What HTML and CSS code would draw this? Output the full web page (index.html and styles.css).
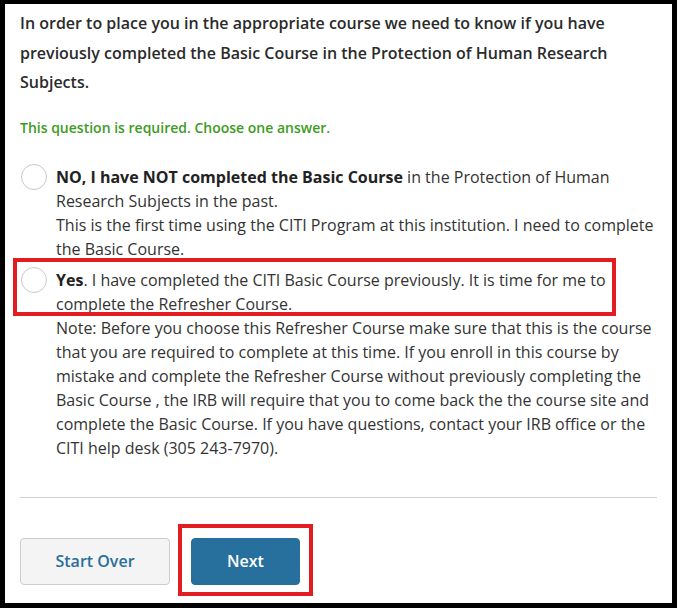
FILE: index.html
```html
<!DOCTYPE html>
<html lang="en">
<head>
<meta charset="utf-8">
<title>Course selection</title>
<link rel="stylesheet" href="styles.css">
</head>
<body>
<div class="frame">
  <p class="question">In order to place you in the appropriate course we need to know if you have previously completed the Basic Course in the Protection of Human Research Subjects.</p>
  <p class="required">This question is required. Choose one answer.</p>
  <div class="options">
    <label class="option">
      <span class="radio"></span>
      <span class="text"><strong>NO, I have NOT completed the Basic Course</strong> in the Protection of Human Research Subjects in the past.<br>This is the first time using the CITI Program at this institution. I need to complete the Basic Course.</span>
    </label>
    <label class="option">
      <span class="radio"></span>
      <span class="text"><strong>Yes</strong>. I have completed the CITI Basic Course previously. It is time for me to complete the Refresher Course.<br>Note: Before you choose this Refresher Course make sure that this is the course that you are required to complete at this time. If you enroll in this course by mistake and complete the Refresher Course without previously completing the Basic Course , the IRB will require that you to come back the the course site and complete the Basic Course. If you have questions, contact your IRB office or the CITI help desk (305 243-7970).</span>
      <span class="highlight"></span>
    </label>
  </div>
  <hr class="divider">
  <div class="actions">
    <button class="btn btn-secondary" type="button">Start Over</button>
    <span class="next-wrap">
      <button class="btn btn-primary" type="button">Next</button>
      <span class="next-mark"></span>
    </span>
  </div>
</div>
</body>
</html>
```
FILE: styles.css
```css
html, body {
  margin: 0;
  padding: 0;
  background: #fff;
}
body {
  font-family: "Open Sans", "Noto Sans", sans-serif;
  color: #333;
}
.frame {
  box-sizing: border-box;
  width: 677px;
  height: 608px;
  border: 5px solid #000;
  border-top-width: 4px;
  padding: 5px 15px 0 15px;
}
.question {
  margin: 0;
  font-size: 16px;
  line-height: 29.5px;
  font-weight: 600;
  color: #2b2b2b;
}
.required {
  margin: 20px 0 0 0;
  font-size: 14px;
  line-height: 20px;
  font-weight: 600;
  color: #3d9b1d;
}
.options {
  margin-top: 27px;
  display: flex;
  flex-direction: column;
  gap: 7px;
}
.option {
  position: relative;
  display: flex;
  align-items: flex-start;
  gap: 9px;
  padding-left: 1px;
  font-size: 16px;
  line-height: 24px;
  color: #333;
}
.radio {
  flex: none;
  box-sizing: border-box;
  width: 26px;
  height: 26px;
  margin-top: -1px;
  border: 1px solid #c8c8c8;
  border-radius: 50%;
  background: #fff;
}
.text strong {
  font-weight: 700;
  color: #222;
}
.highlight {
  position: absolute;
  left: -7px;
  top: -10px;
  width: 603px;
  height: 58px;
  box-sizing: border-box;
  border: 4px solid #e21d22;
  pointer-events: none;
}
.divider {
  margin: 37px 0 0 0;
  border: 0;
  height: 1px;
  background: #cfcfcf;
}
.actions {
  margin-top: 40px;
  display: flex;
  gap: 21px;
}
.btn {
  box-sizing: border-box;
  height: 47px;
  font-family: "Open Sans", "Noto Sans", sans-serif;
  font-size: 16px;
  font-weight: 600;
  border-radius: 4px;
  cursor: pointer;
}
.btn-secondary {
  width: 150px;
  background: #f4f4f4;
  border: 1px solid #cdcdcd;
  color: #2a6f9b;
}
.next-wrap {
  position: relative;
  display: block;
}
.btn-primary {
  display: block;
  width: 109px;
  background: #27709e;
  border: 1px solid #27709e;
  color: #fff;
}
.next-mark {
  position: absolute;
  left: -13px;
  right: -13px;
  top: -14px;
  bottom: -11px;
  border: 4px solid #e21d22;
  pointer-events: none;
}
```
